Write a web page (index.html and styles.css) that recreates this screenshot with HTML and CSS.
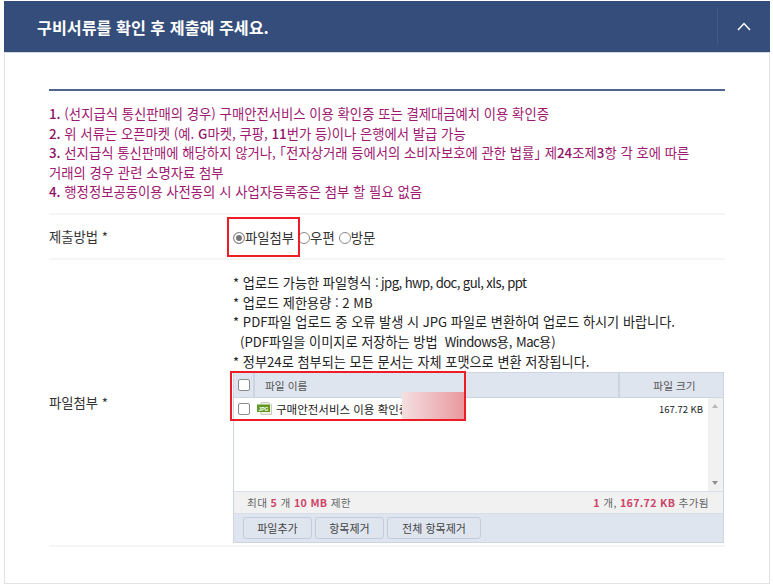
FILE: index.html
```html
<!DOCTYPE html>
<html lang="ko">
<head>
<meta charset="utf-8">
<title>구비서류</title>
<link rel="stylesheet" href="styles.css">
</head>
<body>
<div class="panel">
  <header class="head">
    <h2 class="title">구비서류를 확인 후 제출해 주세요.</h2>
    <div class="toggle">
      <svg width="14" height="9" viewBox="0 0 14 9"><path d="M1 8 L7 1.5 L13 8" fill="none" stroke="#fff" stroke-width="1.5"/></svg>
    </div>
  </header>
  <div class="content">
    <div class="rule"></div>
    <ol class="notes">
      <li><b>1.</b> (선지급식 통신판매의 경우) 구매안전서비스 이용 확인증 또는 결제대금예치 이용 확인증</li>
      <li><b>2.</b> 위 서류는 오픈마켓 (예. <b>G</b>마켓, 쿠팡, <b>11</b>번가 등)이나 은행에서 발급 가능</li>
      <li><b>3.</b> 선지급식 통신판매에 해당하지 않거나, <span class="br">「</span>전자상거래 등에서의 소비자보호에 관한 법률<span class="br">」</span> 제<b>24</b>조제<b>3</b>항 각 호에 따른<br>거래의 경우 관련 소명자료 첨부</li>
      <li><b>4.</b> 행정정보공동이용 사전동의 시 사업자등록증은 첨부 할 필요 없음</li>
    </ol>
    <div class="row method">
      <div class="label">제출방법 *</div>
      <div class="radios">
        <span class="red-box radio-mark"></span>
        <span class="radio on"></span><span>파일첨부</span>
        <span class="radio gap"></span><span>우편</span>
        <span class="radio gap"></span><span>방문</span>
      </div>
    </div>
    <div class="row attach">
      <div class="label">파일첨부 *</div>
      <div class="field">
        <div class="hints">
          <p>* 업로드 가능한 파일형식 <span class="tight">: jpg, hwp, doc, gul, xls, ppt</span></p>
          <p>* 업로드 제한용량 : 2 MB</p>
          <p>* PDF파일 업로드 중 오류 발생 시 JPG 파일로 변환하여 업로드 하시기 바랍니다.</p>
          <p class="indent">(PDF파일을 이미지로 저장하는 방법 &nbsp;<span class="tight">Windows</span>용, <span class="tight">Mac</span>용)</p>
          <p>* 정부24로 첨부되는 모든 문서는 자체 포맷으로 변환 저장됩니다.</p>
        </div>
        <div class="uploader">
          <span class="blur"></span>
          <span class="red-box file-mark"></span>
          <div class="thead">
            <div class="th-check"><span class="check"></span></div>
            <div class="th-name">파일 이름</div>
            <div class="th-size">파일 크기</div>
          </div>
          <div class="tbody">
            <div class="list">
              <div class="file">
                <span class="check"></span>
                <svg class="jpg" width="15" height="13" viewBox="0 0 15 13"><path d="M4 0.5 H12 L14.5 3 V12.5 H4 Z" fill="#f1f1ea" stroke="#c9c9c0" stroke-width="1"/><rect x="0" y="2.5" width="13" height="7.5" fill="#5f9a1e"/><text x="6.5" y="8.6" class="jpg-t" text-anchor="middle">JPG</text></svg>
                <span class="fname">구매안전서비스 이용 확인증</span>
                <span class="fsize">167.72 KB</span>
              </div>
            </div>
            <div class="scroll"><i class="up"></i><i class="down"></i></div>
          </div>
          <div class="info">
            <span>최대 <b>5</b> 개 <b>10 MB</b> 제한</span>
            <span><b>1</b> 개, <b>167.72 KB</b> 추가됨</span>
          </div>
          <div class="btns">
            <button class="btn w1">파일추가</button>
            <button class="btn w1">항목제거</button>
            <button class="btn w2">전체 항목제거</button>
          </div>
        </div>
      </div>
    </div>
  </div>
</div>
</body>
</html>
```

FILE: styles.css
```css
* { box-sizing: border-box; }
html, body { margin: 0; padding: 0; background: #fff; }
body {
  width: 773px;
  height: 585px;
  padding: 1px 3px 0 4px;
  overflow: hidden;
  font-family: "Noto Sans CJK KR", "Open Sans", sans-serif;
  font-size: 13.35px;
  color: #333;
}
.panel {
  height: 583px;
  border: 1px solid #e2e2e2;
  border-top: 0;
}
.head {
  height: 52px;
  margin: 0 -1px;
  background: #344d7a;
  display: flex;
  align-items: center;
  justify-content: space-between;
  border-bottom: 1px solid #d5d9e0;
}
.title {
  margin: 0 0 0 33px;
  font-size: 16.2px;
  font-weight: 700;
  color: #fff;
}
.toggle {
  width: 53px;
  height: 37px;
  border-left: 1px solid #42598a;
  display: flex;
  align-items: center;
  justify-content: center;
}
.content { padding: 36px 44px 0 44px; }
.rule { height: 2px; background: #4f6690; }
.notes {
  list-style: none;
  margin: 13px 0 0;
  padding: 0 0 11px;
  color: #a01870;
  line-height: 19.6px;
}
.notes b { font-weight: 500; color: #8f1266; }
.br { font-feature-settings: "halt"; }
.row { display: flex; border-top: 2px solid #f5f5f5; }
.label { width: 184px; }
.method { height: 45px; align-items: center; }
.radios {
  position: relative;
  display: flex;
  align-items: center;
  margin-top: 2px;
}
.radio {
  width: 12px;
  height: 12px;
  border: 1px solid #8a8a8a;
  border-radius: 50%;
  margin-top: 2px;
  background: #fff;
}
.radio.gap { margin-left: 4px; }
.radio.on { box-shadow: inset 0 0 0 2px #fff; background: #777; }
.red-box { position: absolute; border: 2px solid #ee1c25; z-index: 2; }
.radio-mark { left: -6px; top: -11px; width: 73px; height: 40px; }
.attach {
  height: 289px;
  align-items: center;
  border-bottom: 2px solid #f5f5f5;
}
.field { width: 491px; align-self: flex-start; }
.hints { padding-top: 13px; line-height: 19.7px; color: #222; font-size: 13.17px; }
.hints p { margin: 0; }
.tight { letter-spacing: -.6px; }
.indent { padding-left: 7px; }
.uploader {
  position: relative;
  margin-top: 1px;
  height: 171px;
  border: 1px solid #cdd5e3;
  display: flex;
  flex-direction: column;
  font-size: 10.7px;
}
.file-mark { left: -4px; top: -2px; width: 236px; height: 50px; }
.blur {
  position: absolute;
  left: 168px;
  top: 19px;
  width: 64px;
  height: 29px;
  background: linear-gradient(90deg, #f4dfe0, #e99aa0 95%);
  z-index: 1;
}
.thead {
  height: 25px;
  display: flex;
  align-items: center;
  background: #dfe5ef;
  border-bottom: 1px solid #cdd5e3;
  color: #555;
}
.thead > div { height: 100%; display: flex; align-items: center; }
.th-check { width: 21px; padding-left: 4px; border-right: 2px solid #ccd4e2; }
.th-name { flex: 1; padding-left: 10px; }
.th-size {
  width: 105px;
  padding-left: 6px;
  justify-content: center;
  border-left: 2px solid #ccd4e2;
}
.check {
  display: block;
  flex: none;
  width: 12px;
  height: 12px;
  background: #fff;
  border: 1px solid #8c8c8c;
  border-radius: 2px;
}
.tbody { height: 93px; display: flex; background: #fff; }
.list { flex: 1; }
.file {
  display: flex;
  align-items: center;
  height: 21px;
  padding: 0 5px 0 4px;
  color: #222;
}
.jpg { margin: 0 4px 0 7px; flex: none; }
.jpg-t { font-size: 5px; font-weight: 700; fill: #fff; font-family: "Liberation Sans", sans-serif; }
.fname { font-size: 11.5px; }
.fsize { margin-left: auto; font-size: 9.5px; }
.scroll {
  position: relative;
  width: 15px;
  background: #f1f1f1;
}
.scroll i {
  position: absolute;
  left: 4px;
  width: 0;
  height: 0;
  border-left: 3.5px solid transparent;
  border-right: 3.5px solid transparent;
}
.up { top: 6px; border-bottom: 4px solid #b8b8b8; }
.down { bottom: 6px; border-top: 4px solid #8f8f8f; }
.info {
  height: 23px;
  display: flex;
  align-items: center;
  justify-content: space-between;
  padding: 0 14px 0 13px;
  background: #f1f1f1;
  border-top: 1px solid #d8deea;
  border-bottom: 1px solid #d8deea;
  color: #666;
  letter-spacing: .3px;
}
.info b { color: #cf4467; font-weight: 700; }
.btns {
  flex: 1;
  display: flex;
  gap: 3px;
  align-items: center;
  padding: 0 0 1px 9px;
  background: #dfe5ef;
}
.btn {
  height: 22px;
  padding: 0;
  border: 1px solid #c3ccdb;
  border-radius: 3px;
  background: #dfe5ef;
  color: #444;
  font: inherit;
  font-size: 11px;
}
.w1 { width: 69px; }
.w2 { width: 94px; }
```
